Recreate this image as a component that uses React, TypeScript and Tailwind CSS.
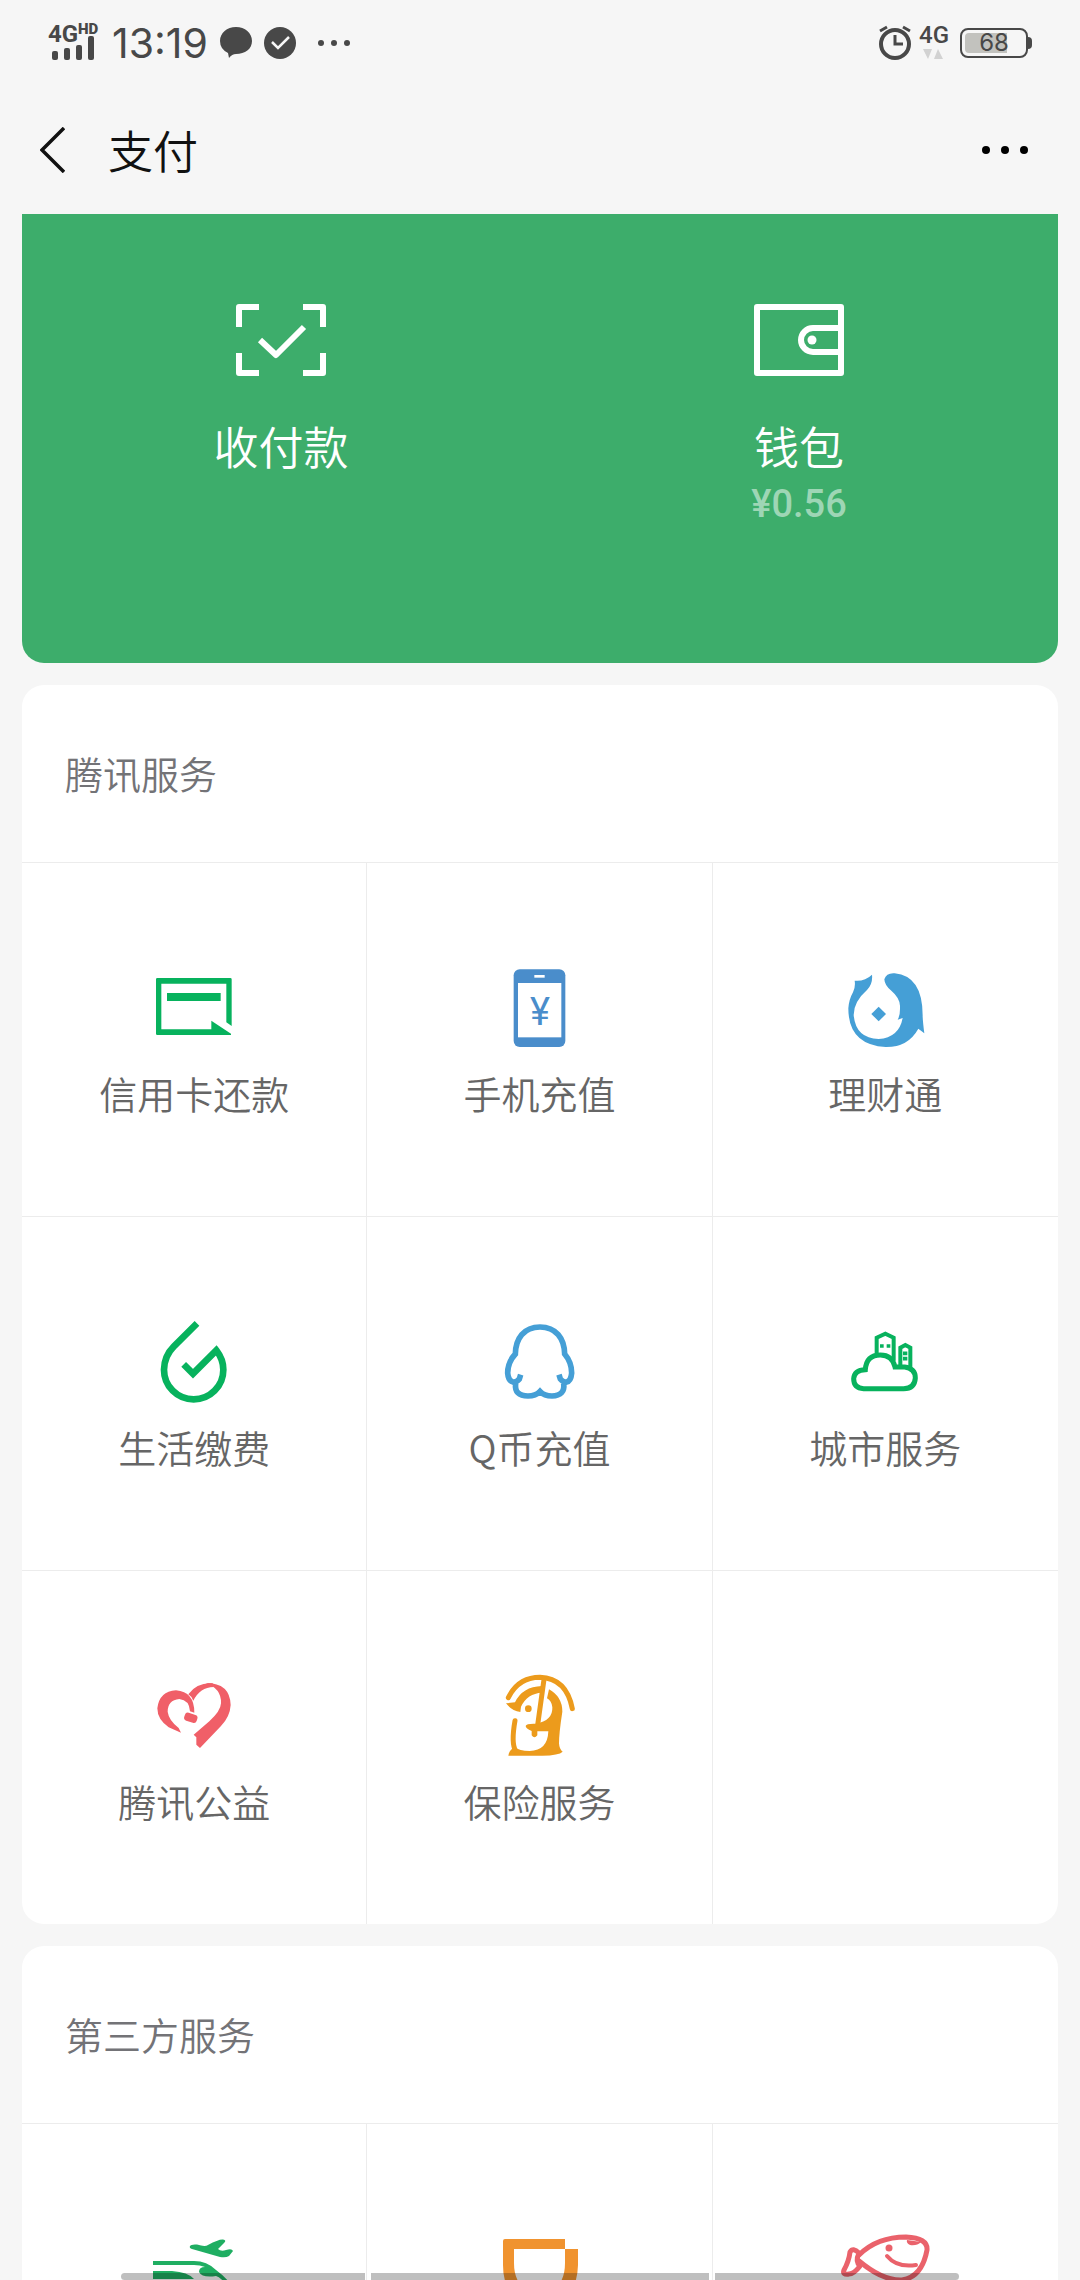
import type { ReactNode } from "react";

interface Service {
  name: string;
  icon: ReactNode;
}

const GREEN = "#07b25d";
const BLUE = "#459fd6";
const PHONE_BLUE = "#4a8dcb";
const RED = "#f05f68";
const ORANGE = "#ec9b1c";

function CreditCardIcon() {
  return (
    <svg viewBox="212 72 264 264" className="size-[88px]" fill={GREEN} aria-hidden="true">
      <path d="M234 114H453Q457 114 457 118V258L441 247V131H246V268H396V242L455 281V285H234Q230 285 230 281V118Q230 114 234 114Z" />
      <rect x="263" y="159" width="161" height="24" />
    </svg>
  );
}

function PhoneIcon() {
  return (
    <svg viewBox="1248 72 264 264" className="size-[88px]" aria-hidden="true">
      <rect x="1304" y="88" width="155" height="233" rx="18" fill={PHONE_BLUE} />
      <rect x="1317" y="129" width="130" height="163" fill="#fff" />
      <rect x="1366" y="105" width="31" height="8" fill="#fff" />
      <text
        x="1383"
        y="255"
        textAnchor="middle"
        fontSize="114"
        className="font-['Roboto',sans-serif] font-normal"
        fill={PHONE_BLUE}
      >
        ¥
      </text>
    </svg>
  );
}

function WealthIcon() {
  return (
    <svg viewBox="184 72 264 264" className="size-[88px]" fill={BLUE} aria-hidden="true">
      <path d="M225 122Q255 125 277 104Q280 132 262 150Q222 185 222 225Q228 295 297 297Q358 293 369 234L354 239Q362 225 361 200Q362 175 335 152Q315 137 314 118Q320 98 345 100Q430 108 429 230Q430 250 434 280L416 266Q385 322 318 321Q206 315 206 205Q208 178 220 157Q228 140 225 122Z" />
      <path d="M297 200L319 222L297 244L275 222Z" />
    </svg>
  );
}

function UtilityIcon() {
  return (
    <svg viewBox="212 54 264 264" className="size-[88px]" fill="none" stroke={GREEN} strokeWidth="20" aria-hidden="true">
      <path d="M353 70L283 140Q255 168 254 209A89 89 0 0 0 432 209Q432 178 411 151L341 221L313 193" />
    </svg>
  );
}

function PenguinIcon() {
  return (
    <svg viewBox="1248 54 264 264" className="size-[88px]" fill="none" stroke={BLUE} strokeWidth="17" aria-hidden="true">
      <path d="M1325 224L1321 237Q1311 248 1302 246Q1288 243 1286 219Q1286 187 1309 162C1310 115 1335 81 1383 81S1456 115 1457 162Q1478 187 1478 219Q1476 243 1463 246Q1453 248 1444 237L1440 224" />
      <path d="M1310 250Q1305 288 1347 288Q1370 288 1383 274Q1396 288 1419 288Q1459 287 1454 250" />
    </svg>
  );
}

function CityIcon() {
  return (
    <svg viewBox="184 54 264 264" className="size-[88px]" fill="none" stroke={GREEN} strokeWidth="15" aria-hidden="true">
      <path d="M257 209Q260 165 302 165Q338 165 346 201H375Q407 205 407 234Q405 266 372 266H252Q222 264 222 236Q224 210 257 209Z" />
      <path strokeWidth="12" d="M291 165V113L317 101L342 113V182M362 198V143L377 135L392 143V202" />
      <path strokeWidth="11" d="M301 138H312M321 138H332M370 160H383M370 176H383" />
    </svg>
  );
}

function CharityIcon() {
  return (
    <svg viewBox="212 66 264 264" className="size-[88px]" fill={RED} aria-hidden="true">
      <path d="M305 248L268 232Q234 208 234 175Q240 124 290 121Q345 125 345 188L332 184Q330 150 300 147Q265 150 265 185Q268 210 298 234Z" />
      <path d="M327 133Q352 97 400 100L403 111Q362 112 342 152Q338 140 327 133Z" />
      <path d="M378 99Q452 98 454 165Q452 200 425 228L362 294L351 284V262L343 254L390 214Q424 183 425 160Q427 115 378 99Z" />
      <rect x="315" y="191" width="39" height="25" rx="9" transform="rotate(18 335 203)" />
    </svg>
  );
}

function InsuranceIcon() {
  return (
    <svg viewBox="1248 66 264 264" className="size-[88px]" fill={ORANGE} aria-hidden="true">
      <g fill="none" stroke={ORANGE} strokeWidth="15" strokeLinecap="round">
        <path d="M1288 143Q1318 82 1383 82Q1462 85 1480 176" />
        <path d="M1395 88L1376 225" />
        <path d="M1308 212Q1296 280 1310 303" />
      </g>
      <circle cx="1348" cy="176" r="10" />
      <path d="M1281 160L1308 157Q1330 110 1389 108V128Q1345 130 1326 170L1324 186Q1298 182 1281 160Z" />
      <path d="M1288 317Q1290 300 1308 290Q1320 303 1352 303Q1406 302 1408 244H1375V256Q1366 268 1358 256V243Q1340 235 1340 228Q1342 220 1370 221Q1422 212 1420 172Q1418 152 1404 145L1410 118Q1450 140 1450 185Q1440 250 1440 280Q1441 298 1451 305Q1440 316 1390 317Z" />
    </svg>
  );
}

function TravelIcon() {
  return (
    <svg viewBox="0 0 88 88" className="size-[88px]" fill="#1fae62" aria-hidden="true">
      <path d="M40 21Q41 19 47 19.500Q55 22 58 20Q69 14 73 14.500Q77 15 74 18L68 24Q71 27 76 25Q82 23 83 26L79 31Q76 33 70 32L42 24Q39 23 40 21Z" />
      <path d="M3 36H44Q57 36 66 45Q73 50 80 58L77 60Q70 52 66 51Q52 53 49 47Q49 42 55 42Q50 40 44 40H3Z" />
      <path d="M3 46H22Q38 47 44 54H3Z" />
    </svg>
  );
}

function RideIcon() {
  return (
    <svg viewBox="0 0 88 88" className="size-[88px]" fill="#f0932f" aria-hidden="true">
      <path d="M10 14H70V24H19V38Q19 66 45 68Q70 66 70 38V24H83V40Q82 79 45 79Q8 78 8 40V16Q8 14 10 14Z" />
    </svg>
  );
}

function ShoppingIcon() {
  return (
    <svg viewBox="0 0 88 88" className="size-[88px] overflow-visible" fill="none" stroke="#ea626b" strokeWidth="5" strokeLinejoin="round" strokeLinecap="round" aria-hidden="true">
      <path d="M18 30Q36 12 65 12Q87 13 86 25Q81 52 61 55Q42 56 18 36" />
      <path d="M18 28Q12 22 9 27Q8 36 3 45Q1 50 8 49Q13 49 19 41Q14 36 18 28Z" />
      <path strokeWidth="4" d="M46 31Q56 43 75 40" />
      <circle cx="48" cy="23" r="3.500" fill="#ea626b" stroke="none" />
      <path d="M66 15L80 17Q76 21 69 20Q65 18 66 15Z" fill="#ea626b" stroke="none" />
    </svg>
  );
}

const TENCENT_SERVICES: Service[] = [
  { name: "信用卡还款", icon: <CreditCardIcon /> },
  { name: "手机充值", icon: <PhoneIcon /> },
  { name: "理财通", icon: <WealthIcon /> },
  { name: "生活缴费", icon: <UtilityIcon /> },
  { name: "Q币充值", icon: <PenguinIcon /> },
  { name: "城市服务", icon: <CityIcon /> },
  { name: "腾讯公益", icon: <CharityIcon /> },
  { name: "保险服务", icon: <InsuranceIcon /> },
];

const THIRD_PARTY_SERVICES: Service[] = [
  { name: "", icon: <TravelIcon /> },
  { name: "", icon: <RideIcon /> },
  { name: "", icon: <ShoppingIcon /> },
];

function StatusBar() {
  return (
    <div className="flex h-[86px] items-center justify-between px-12 font-normal text-[#484848]">
      <div className="flex items-center">
        <svg viewBox="0 -8 56 52" className="h-[52px] w-14" fill="currentColor" aria-hidden="true">
          <text x="0" y="17" fontSize="24" className="font-['Roboto',sans-serif] font-bold">4G</text>
          <text x="30" y="9" fontSize="15" className="font-['Roboto',sans-serif] font-black">HD</text>
          <rect x="4" y="26" width="6" height="9" rx="2" />
          <rect x="16" y="23" width="6" height="12" rx="2" />
          <rect x="28" y="20" width="6" height="15" rx="2" />
          <rect x="40" y="11" width="6" height="24" rx="2" />
        </svg>
        <span className="ml-2 font-['Inter',sans-serif] text-[41px] leading-none">13:19</span>
        <svg viewBox="0 0 32 32" className="ml-3 size-8" fill="currentColor" aria-hidden="true">
          <path d="M16 0C25 0 32 6 32 14S25 27 16 27Q12 27 9 31L8 26Q0 22 0 14C0 6 7 0 16 0Z" />
        </svg>
        <svg viewBox="0 0 32 32" className="ml-3 size-8" aria-hidden="true">
          <circle cx="16" cy="16" r="16" fill="currentColor" />
          <path d="M8 15L14 21L25 10" fill="none" stroke="#f7f7f7" strokeWidth="2.500" />
        </svg>
        <svg viewBox="0 0 32 6" className="ml-[22px] h-1.5 w-8" fill="currentColor" aria-hidden="true">
          <circle cx="3" cy="3" r="3" />
          <circle cx="16" cy="3" r="3" />
          <circle cx="29" cy="3" r="3" />
        </svg>
      </div>
      <div className="flex items-center gap-2">
        <svg viewBox="0 0 32 36" className="h-9 w-8" fill="none" stroke="currentColor" strokeWidth="4" aria-hidden="true">
          <circle cx="16" cy="19" r="14" />
          <path strokeWidth="3" d="M16 10V19H24M1 6L8 2M24 2L31 6" />
        </svg>
        <svg viewBox="0 -8 33 52" className="h-[52px] w-[33px]" fill="currentColor" aria-hidden="true">
          <text x="0" y="18" fontSize="24" className="font-['Roboto',sans-serif] font-medium">4G</text>
          <path fill="#d2d2d2" d="M4 24H13L9 34ZM15 34H24L19 24Z" />
        </svg>
        <div className="flex items-center">
          <div className="grid h-[30px] w-[68px] items-center rounded-lg border-2 border-current px-[3px]">
            <div className="col-start-1 row-start-1 h-5 w-[42px] rounded-l-sm bg-[#c2c2be]" />
            <span className="col-start-1 row-start-1 text-center font-['Inter',sans-serif] text-[24px] leading-5">68</span>
          </div>
          <div className="h-3 w-1 rounded-r-sm bg-current" />
        </div>
      </div>
    </div>
  );
}

function TitleBar() {
  return (
    <header className="flex h-32 items-center justify-between px-10 text-[#111]">
      <div className="flex items-center gap-[43px]">
        <button type="button" aria-label="返回">
          <svg viewBox="0 0 25 46" className="h-[46px] w-[25px]" fill="none" stroke="currentColor" strokeWidth="3.500" aria-hidden="true">
            <path d="M24 1L2 23L24 45" />
          </svg>
        </button>
        <h1 className="text-[45px] leading-[60px]">支付</h1>
      </div>
      <button type="button" aria-label="更多" className="px-3">
        <svg viewBox="0 0 46 8" className="h-2 w-[46px]" fill="#000" aria-hidden="true">
          <circle cx="4" cy="4" r="4" />
          <circle cx="23" cy="4" r="4" />
          <circle cx="42" cy="4" r="4" />
        </svg>
      </button>
    </header>
  );
}

function WalletPanel() {
  return (
    <section className="grid h-[449px] grid-cols-2 rounded-b-[22px] bg-[#3dad6b] pt-[90px] text-white">
      <button type="button" className="flex flex-col items-center">
        <svg viewBox="0 0 90 72" className="h-[72px] w-[90px]" fill="none" stroke="currentColor" strokeWidth="6" strokeLinejoin="round" aria-hidden="true">
          <path d="M3 23V3H23M67 3H87V23M87 49V69H67M23 69H3V49M24 36L40 51L68 23" />
        </svg>
        <span className="mt-10 text-[45px] leading-[60px]">收付款</span>
      </button>
      <button type="button" className="flex flex-col items-center">
        <svg viewBox="0 0 90 72" className="h-[72px] w-[90px]" fill="none" stroke="currentColor" strokeWidth="6" strokeLinejoin="round" aria-hidden="true">
          <path d="M3 3H87V69H3ZM87 24H59A12 12 0 0 0 59 48H87" />
          <circle cx="58" cy="36" r="4.500" fill="currentColor" stroke="none" />
        </svg>
        <span className="mt-10 text-[45px] leading-[60px]">钱包</span>
        <span className="font-['Roboto',sans-serif] text-[38px] leading-[56px] font-medium text-[#9ed6b5]">¥0.56</span>
      </button>
    </section>
  );
}

function ServiceSection({ title, services }: { title: string; services: Service[] }) {
  // Pad the last row so its dividers reach the card edge.
  const blanks = (3 - (services.length % 3)) % 3;
  const cell =
    "flex h-[354px] flex-col items-center border-t border-r border-[#ececec] pt-[101px] text-[#666] nth-[3n]:border-r-0";
  return (
    <section className="shrink-0 overflow-hidden rounded-[22px] bg-white">
      <h2 className="px-[43px] pt-[62px] pb-[63px] text-[38px] leading-[52px] text-[#737377]">{title}</h2>
      <div className="grid grid-cols-3">
        {services.map((service, i) => (
          <button key={i} type="button" className={cell}>
            {service.icon}
            {service.name && <span className="mt-[15px] text-[38px] leading-[52px]">{service.name}</span>}
          </button>
        ))}
        {Array.from({ length: blanks }, (_, i) => (
          <div key={i} className={cell} />
        ))}
      </div>
    </section>
  );
}

export default function App() {
  return (
    <div className="relative h-screen overflow-hidden bg-[#f6f6f6] font-['Noto_Sans_CJK_SC',sans-serif] font-[350]">
      <StatusBar />
      <TitleBar />
      <main className="flex flex-col gap-[22px] px-[22px]">
        <WalletPanel />
        <ServiceSection title="腾讯服务" services={TENCENT_SERVICES} />
        <ServiceSection title="第三方服务" services={THIRD_PARTY_SERVICES} />
      </main>
      {/* Navigation gesture hints */}
      <div className="absolute inset-x-0 bottom-0 flex h-[7px] gap-1.5 px-[121px]">
        <div className="flex-[244] rounded-l-full bg-black/25" />
        <div className="flex-[338] bg-black/25" />
        <div className="flex-[244] rounded-r-full bg-black/25" />
      </div>
    </div>
  );
}
